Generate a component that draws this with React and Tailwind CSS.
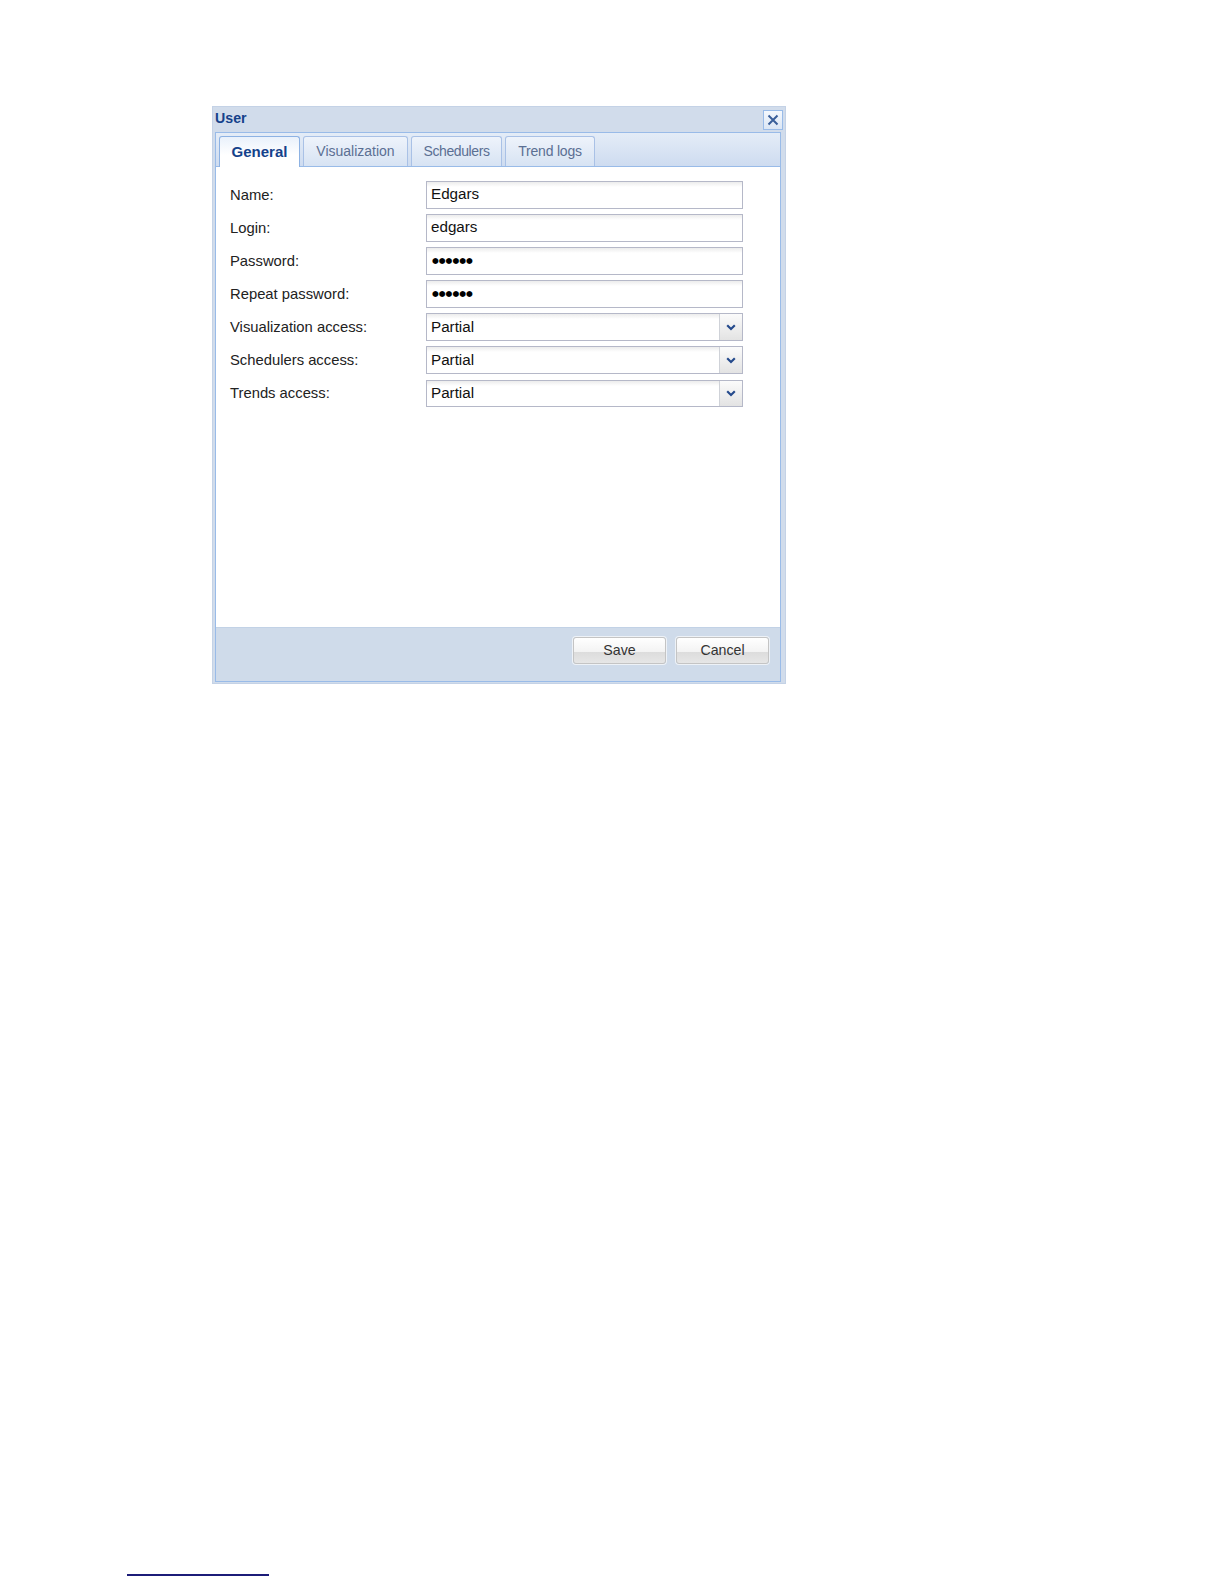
import React from "react"

const fields = [
  { label: "Name:", value: "Edgars" },
  { label: "Login:", value: "edgars" },
  { label: "Password:", value: "●●●●●●", secret: true },
  { label: "Repeat password:", value: "●●●●●●", secret: true },
  { label: "Visualization access:", value: "Partial", select: true },
  { label: "Schedulers access:", value: "Partial", select: true },
  { label: "Trends access:", value: "Partial", select: true },
]

const tabs = [
  { name: "General", w: "w-[81px]" },
  { name: "Visualization", w: "w-[105px]" },
  { name: "Schedulers", w: "w-[91px] tracking-[-0.4px]" },
  { name: "Trend logs", w: "w-[90px] tracking-[-0.2px]" },
]

function Field({ field }) {
  return (
    <div className="flex items-center h-[27.5px]">
      <div className="w-[196px] text-[14.8px] text-[#222]">{field.label}</div>
      <div className="flex w-[317px] h-[27.5px] border border-[#b5b8c8] bg-[linear-gradient(#ececec,#ffffff_5px)]">
        <div
          className={
            field.secret
              ? "flex-1 flex items-center pl-[5px] font-['DejaVu_Sans'] text-[7.8px] text-black"
              : "flex-1 flex items-center pl-[4px] text-[15.2px] text-[#111]"
          }
        >
          {field.value}
        </div>
        {field.select && (
          <div className="w-[23px] flex items-center justify-center border-l border-[#cfd2d8] bg-[linear-gradient(#fbfbfb,#e3e3e3)]">
            <svg width="10" height="7" viewBox="0 0 10 7">
              <path d="M1.2 1.3 L5 5 L8.8 1.3" fill="none" stroke="#254a8c" strokeWidth="2.2" />
            </svg>
          </div>
        )}
      </div>
    </div>
  )
}

function Btn({ children }) {
  return (
    <button className="w-[93px] h-[26.5px] rounded-[3px] border border-[#c4c4c4] bg-[linear-gradient(#ffffff,#f3f3f3_55%,#dcdcdc_56%,#e6e6e6)] text-[14.2px] text-[#333] shadow-[0_0_0_1px_#eef2f7]">
      {children}
    </button>
  )
}

export default function App() {
  return (
    <div className="min-h-[1584px] bg-white pt-[106px] font-['Liberation_Sans',Arial,sans-serif]">
      <div className="ml-[212px] w-[574px] h-[578px] border border-[#c4d2e6] bg-[#d1dceb] flex flex-col">
        {/* title bar */}
        <div className="h-[25px] flex items-center justify-between pl-[2px] pr-[2px]">
          <span className="text-[14.2px] font-bold text-[#15428b] -mt-[2px]">User</span>
          <button className="w-[20px] h-[20px] border border-[#99bbe8] bg-[linear-gradient(#f4f8fd,#dbe6f4)] flex items-center justify-center">
            <svg width="12" height="12" viewBox="0 0 12 12">
              <path d="M1.5 1.5 L10.5 10.5 M10.5 1.5 L1.5 10.5" stroke="#3a5f9a" strokeWidth="2" />
            </svg>
          </button>
        </div>

        {/* body */}
        <div className="ml-[2px] w-[566px] flex-1 mb-[1px] border border-[#99bbe8] flex flex-col">
          {/* tab strip */}
          <div className="h-[34px] flex items-end gap-[3px] pl-[3px] border-b border-[#99bbe8] bg-[linear-gradient(#e4ecf7,#cedcf0)]">
            {tabs.map((t, i) =>
              i === 0 ? (
                <div
                  key={t.name}
                  className={`${t.w} h-[31px] -mb-px flex items-center justify-center rounded-t-[3px] border border-b-0 border-[#8db2e3] bg-[linear-gradient(#e9f1fb,#ffffff_60%)] text-[15px] font-bold text-[#15428b]`}
                >
                  {t.name}
                </div>
              ) : (
                <div
                  key={t.name}
                  className={`${t.w} h-[30px] flex items-center justify-center rounded-t-[3px] border border-b-0 border-[#a9c1e6] bg-[linear-gradient(#eef3fb,#d7e3f3)] text-[14px] text-[#5b6f93]`}
                >
                  {t.name}
                </div>
              )
            )}
          </div>

          {/* form */}
          <div className="flex-1 bg-white pl-[14px] pt-[14px] flex flex-col gap-[5.6px]">
            {fields.map(f => (
              <Field key={f.label} field={f} />
            ))}
          </div>

          {/* footer */}
          <div className="h-[54px] bg-[#cfdbea] border-t border-[#c2d2e6] flex justify-end items-start gap-[10px] pt-[9px] pr-[11px]">
            <Btn>Save</Btn>
            <Btn>Cancel</Btn>
          </div>
        </div>
      </div>

      <div className="ml-[127px] mt-[890px] w-[142px] h-[2px] bg-[#1c1c78]" />
    </div>
  )
}
